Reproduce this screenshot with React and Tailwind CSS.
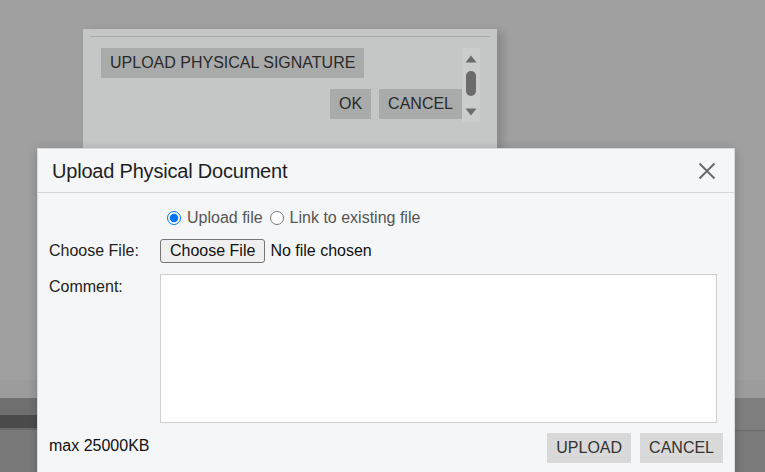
export default function App() {
  const btn =
    'h-[30px] px-[9px] flex items-center text-[16px] leading-none';

  return (
    <div
      className="relative w-[765px] h-[472px] overflow-hidden bg-[#a0a0a0] flex flex-col"
      style={{ fontFamily: '"Liberation Sans", Arial, sans-serif' }}
    >
      <div className="flex-1" />
      {/* dimmed page footer behind the dialogs */}
      <div className="h-[92px] flex">
        <div className="w-[37px] flex flex-col">
          <div className="h-[18px] bg-[#9c9c9c]" />
          <div className="h-[17px] bg-[#6f6f6f]" />
          <div className="h-[13px] bg-[#4b4b4b]" />
          <div className="h-[2px] bg-[#686868]" />
          <div className="flex-1 bg-[#797979]" />
        </div>
        <div className="flex-1 flex flex-col">
          <div className="h-[18px] bg-[#9c9c9c]" />
          <div className="flex-1 bg-[#7a7a7a]" />
        </div>
        <div className="w-[30px] flex flex-col">
          <div className="h-[18px] bg-[#9c9c9c]" />
          <div className="h-[32px] bg-[#7e7e7e]" />
          <div className="h-px bg-[#6b6b6b]" />
          <div className="flex-1 bg-[#7a7a7a]" />
        </div>
      </div>

      {/* underlying signature dialog */}
      <div className="absolute left-[83px] top-[29px] w-[414px] h-[150px] bg-[#c5c6c6] shadow-[6px_2px_8px_rgba(0,0,0,0.14)] px-[7px] pt-[7px]">
        <div className="border-t border-[#a9aaaa]" />
        <div className="flex pl-[11px] pr-[10px] pt-[11px]">
          <div className="flex-1 flex flex-col items-start text-[#2a2a2a]">
            <div className={`${btn} bg-[#a9aaaa]`}>UPLOAD PHYSICAL SIGNATURE</div>
            <div className="self-end flex gap-[8px] mt-[11px]">
              <div className={`${btn} px-[8px] bg-[#a9aaaa]`}>OK</div>
              <div className={`${btn} bg-[#a9aaaa]`}>CANCEL</div>
            </div>
          </div>
          <div className="w-[18px] h-[74px] bg-[#cbcccc] flex flex-col items-center pt-[7px]">
            <svg width="12" height="8" viewBox="0 0 12 8">
              <path d="M6 0.5 L11.5 7.5 L0.5 7.5 Z" fill="#6b6b6b" />
            </svg>
            <div className="w-[10px] h-[25px] mt-[8px] rounded-full bg-[#6b6b6b]" />
            <svg className="mt-[12px]" width="12" height="8" viewBox="0 0 12 8">
              <path d="M0.5 0.5 L11.5 0.5 L6 7.5 Z" fill="#6b6b6b" />
            </svg>
          </div>
        </div>
      </div>

      {/* upload dialog */}
      <div className="absolute left-[37px] top-[148px] w-[698px] h-[340px] bg-[#f5f6f8] border border-[#d8d9db] shadow-[0_2px_10px_rgba(0,0,0,0.2)] flex flex-col">
        <div className="h-[44px] shrink-0 border-b border-[#d4d5d7] flex items-center justify-between pl-[14px] pr-[18px]">
          <span className="text-[20px] text-[#1f1f1f] tracking-[-0.2px]">Upload Physical Document</span>
          <svg width="18" height="18" viewBox="0 0 18 18">
            <path d="M1.5 1.5 L16.5 16.5 M16.5 1.5 L1.5 16.5" stroke="#666" strokeWidth="1.8" />
          </svg>
        </div>

        <div className="flex flex-col pl-[11px] pt-[15px]">
          <div className="flex items-center h-[20px] pl-[118px] text-[16px] text-[#555]">
            <input type="radio" name="src" defaultChecked className="w-[14px] h-[14px] m-0 mr-[6px] accent-[#0075ff]" />
            <span>Upload file</span>
            <input type="radio" name="src" className="w-[14px] h-[14px] m-0 ml-[7px] mr-[6px]" />
            <span>Link to existing file</span>
          </div>

          <div className="flex items-center mt-[11px] h-[24px]">
            <div className="w-[111px] text-[16px] text-[#222]">Choose File:</div>
            <div className="h-[24px] px-[9px] flex items-center border border-[#767676] rounded-[3px] bg-[#efefef] text-[16px] text-[#111]">
              Choose File
            </div>
            <span className="ml-[5px] text-[16px] text-[#111]">No file chosen</span>
          </div>

          <div className="flex mt-[11px]">
            <div className="w-[111px] text-[16px] text-[#222] pt-px">Comment:</div>
            <textarea className="w-[557px] h-[149px] bg-white border border-[#cfcfcf] resize-none outline-none" />
          </div>

          <div className="flex justify-between items-start mt-[10px] pr-[11px]">
            <div className="text-[16px] text-[#111] pt-[1px]">max 25000KB</div>
            <div className="flex gap-[9px] text-[#333]">
              <div className={`${btn} bg-[#d9d9d9]`}>UPLOAD</div>
              <div className={`${btn} bg-[#d9d9d9]`}>CANCEL</div>
            </div>
          </div>
        </div>
      </div>
    </div>
  );
}
